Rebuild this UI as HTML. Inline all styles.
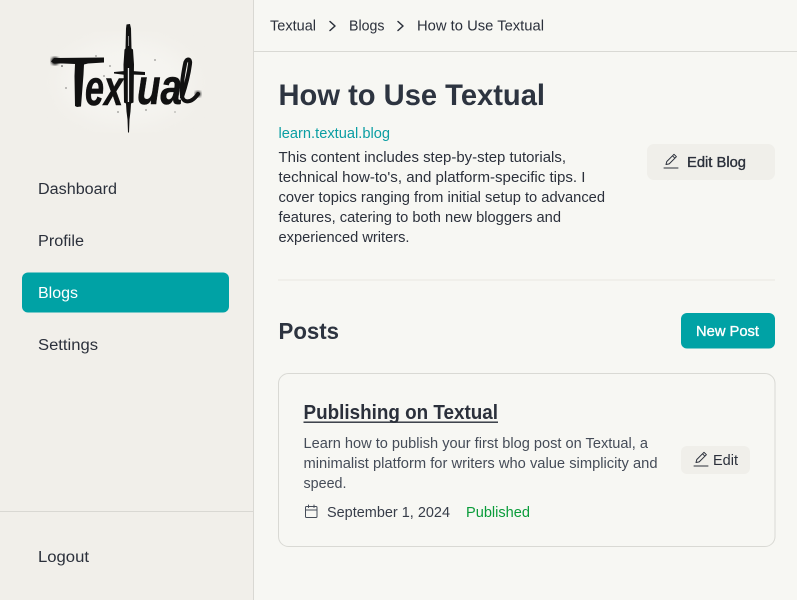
<!DOCTYPE html>
<html lang="en"><head><meta charset="utf-8"><title>How to Use Textual</title>
<style>
html,body{margin:0;padding:0;width:797px;height:600px;overflow:hidden;background:#f7f7f3}
svg{display:block}
text{font-family:"Liberation Sans",sans-serif;font-size:15px;fill:#2b303b}
.i{fill:none;stroke:#2b303b;stroke-width:1;stroke-linecap:round;stroke-linejoin:round}
.logo{font-size:50px;font-weight:bold;font-style:italic;fill:#111;stroke:#111;stroke-width:.6px}
</style></head><body>
<svg width="797" height="600" viewBox="0 0 797 600" xmlns="http://www.w3.org/2000/svg">
<defs><filter id="b"><feGaussianBlur stdDeviation="10"/></filter><filter id="s"><feGaussianBlur stdDeviation="1.200"/></filter></defs>
<rect width="797" height="600" fill="#f7f7f3"/>
<rect width="253.500" height="600" fill="#f1efea"/>
<rect x="253" width="1" height="600" fill="#d9d8d3"/>
<rect x="254" y="51" width="543" height="1" fill="#d9d9d4"/>
<rect x="0" y="511" width="253" height="1" fill="#d9d8d3"/>

<ellipse cx="126" cy="82" rx="66" ry="42" fill="#f5f4f0" filter="url(#b)"/>
<circle cx="55" cy="61" r="4" fill="#222" filter="url(#s)"/>
<circle cx="198" cy="94" r="3" fill="#333" filter="url(#s)"/>
<g fill="#111">
<path d="M54 58l50-.5 0 5-16 1-4 1-.500 10-2.500 32-4 .5-2-1-.5-30 .5-12-12-.5-9 0-3-2z"/>
<path d="M126.500 24.500l3.500-.5 1 4.500.5 20 1.500 1 1 15-.5 38-2.500 1-.5 8-1 8-.5 13-1 0-.5-13-1-8-.5-8-2-1-.5-38 1-15 1-1 .5-20z"/>
<path d="M114 72l11-1 3 1 4-1 13 1 0 3-14-.5-5 .5-12-1.500z"/>
</g>
<rect x="127.800" y="68" width="1.300" height="34" fill="#eee"/>
<rect x="128" y="36" width=".9" height="10" fill="#999"/>
<text class="logo" x="85" y="105" textLength="38" lengthAdjust="spacingAndGlyphs" style="font-size:50px;font-weight:bold;font-style:italic;fill:#111;stroke:#111;stroke-width:.6px">ex</text>
<text class="logo" x="137" y="104" textLength="45" lengthAdjust="spacingAndGlyphs" style="font-size:50px;font-weight:bold;font-style:italic;fill:#111;stroke:#111;stroke-width:.6px">ua</text>
<path d="M182 97c4-12 7-25 8-33 1-6-4-6-5 0-2 10-4 24-3 32 1 7 9 8 16 -2" fill="none" stroke="#111" stroke-width="4" stroke-linecap="round"/>
<g fill="#333"><circle cx="62" cy="66" r=".8"/><circle cx="96" cy="56" r=".6"/><circle cx="66" cy="88" r=".6"/><circle cx="110" cy="66" r=".6"/><circle cx="155" cy="60" r=".6"/><circle cx="118" cy="112" r=".6"/><circle cx="146" cy="110" r=".6"/><circle cx="175" cy="112" r=".5"/><circle cx="104" cy="76" r=".6"/></g>

<text x="38" y="194" textLength="79" lengthAdjust="spacingAndGlyphs" style="font-size:15.500px">Dashboard</text>
<text x="38" y="246" textLength="46" lengthAdjust="spacingAndGlyphs" style="font-size:15.500px">Profile</text>
<rect x="22" y="272.500" width="207" height="40" rx="6" fill="#00a2a5"/>
<text x="38" y="298" textLength="40" lengthAdjust="spacingAndGlyphs" style="font-size:15.500px;fill:#fff">Blogs</text>
<text x="38" y="350" textLength="60" lengthAdjust="spacingAndGlyphs" style="font-size:15.500px">Settings</text>
<text x="38" y="562" textLength="51" lengthAdjust="spacingAndGlyphs" style="font-size:15.500px">Logout</text>

<text x="270" y="30.500" textLength="46" lengthAdjust="spacingAndGlyphs" style="font-size:14.500px">Textual</text>
<path class="i" style="stroke-width:1.500" d="M330 21.500l5 4.500-5 4.500"/>
<text x="349" y="30.500" textLength="35.500" lengthAdjust="spacingAndGlyphs" style="font-size:14.500px">Blogs</text>
<path class="i" style="stroke-width:1.500" d="M398 21.500l5 4.500-5 4.500"/>
<text x="417" y="30.500" textLength="127" lengthAdjust="spacingAndGlyphs" style="font-size:14.500px">How to Use Textual</text>

<text x="278.500" y="105" textLength="266.500" lengthAdjust="spacingAndGlyphs" style="font-size:30px;font-weight:bold;fill:#2d3440">How to Use Textual</text>
<text x="278.500" y="138" textLength="111.500" lengthAdjust="spacingAndGlyphs" style="font-size:14.500px;fill:#0a9ea3">learn.textual.blog</text>
<text x="278.500" y="162" textLength="287.500" lengthAdjust="spacingAndGlyphs" style="font-size:14.500px">This content includes step-by-step tutorials,</text>
<text x="278.500" y="182" textLength="307" lengthAdjust="spacingAndGlyphs" style="font-size:14.500px">technical how-to's, and platform-specific tips. I</text>
<text x="278.500" y="202" textLength="326.500" lengthAdjust="spacingAndGlyphs" style="font-size:14.500px">cover topics ranging from initial setup to advanced</text>
<text x="278.500" y="222" textLength="282.500" lengthAdjust="spacingAndGlyphs" style="font-size:14.500px">features, catering to both new bloggers and</text>
<text x="278.500" y="242" textLength="131" lengthAdjust="spacingAndGlyphs" style="font-size:14.500px">experienced writers.</text>

<rect x="647" y="144" width="128" height="36" rx="7" fill="#f0efea"/>
<path class="i" d="M664 168h14M666 164.500l.8-3 7.200-7.200 2.400 2.400-7.200 7.200-3.200.6zM672.500 155.800l2.400 2.400"/>
<text x="687" y="167" textLength="59" lengthAdjust="spacingAndGlyphs" style="font-size:14.500px;fill:#2b303b;stroke:#2b303b;stroke-width:.35px">Edit Blog</text>

<rect x="278" y="279.500" width="497" height="1" fill="#e8e7e2"/>
<text x="278.500" y="339" textLength="60.500" lengthAdjust="spacingAndGlyphs" style="font-size:23px;font-weight:bold;fill:#2d3440">Posts</text>
<rect x="681" y="313" width="94" height="35.500" rx="6" fill="#00a2a5"/>
<text x="696" y="336" textLength="63" lengthAdjust="spacingAndGlyphs" style="font-size:14.500px;fill:#fff;stroke:#fff;stroke-width:.35px">New Post</text>

<rect x="278.500" y="373.500" width="496.500" height="173" rx="10" fill="#f7f7f3" stroke="#d9d9d4"/>
<text x="303.500" y="419" textLength="194.500" lengthAdjust="spacingAndGlyphs" style="font-size:20px;font-weight:bold;fill:#2b303b">Publishing on Textual</text>
<rect x="303.500" y="421.500" width="194.500" height="1.400" fill="#2b303b"/>
<text x="303.500" y="448" textLength="344.500" lengthAdjust="spacingAndGlyphs" style="font-size:14.500px;fill:#454c58">Learn how to publish your first blog post on Textual, a</text>
<text x="303.500" y="468" textLength="354" lengthAdjust="spacingAndGlyphs" style="font-size:14.500px;fill:#454c58">minimalist platform for writers who value simplicity and</text>
<text x="303.500" y="488" textLength="43" lengthAdjust="spacingAndGlyphs" style="font-size:14.500px;fill:#454c58">speed.</text>
<rect x="681" y="446" width="69" height="28" rx="6" fill="#f0efea"/>
<path class="i" d="M694 466h14M696 462.500l.8-3 7.200-7.200 2.400 2.400-7.200 7.200-3.200.6zM702.500 453.800l2.400 2.400"/>
<text x="713" y="465" textLength="25" lengthAdjust="spacingAndGlyphs" style="font-size:14.500px">Edit</text>
<path class="i" style="stroke:#454c58" d="M306.500 506.500h9.500a1 1 0 0 1 1 1v9a1 1 0 0 1-1 1h-9.500a1 1 0 0 1-1-1v-9a1 1 0 0 1 1-1zM305.500 510h11.500M308.500 505v2.500M314 505v2.500"/>
<text x="327" y="517" textLength="123" lengthAdjust="spacingAndGlyphs" style="font-size:14.500px;fill:#373d49">September 1, 2024</text>
<text x="466" y="517" textLength="64" lengthAdjust="spacingAndGlyphs" style="font-size:14.500px;fill:#0a9c3a">Published</text>
</svg>
</body></html>
